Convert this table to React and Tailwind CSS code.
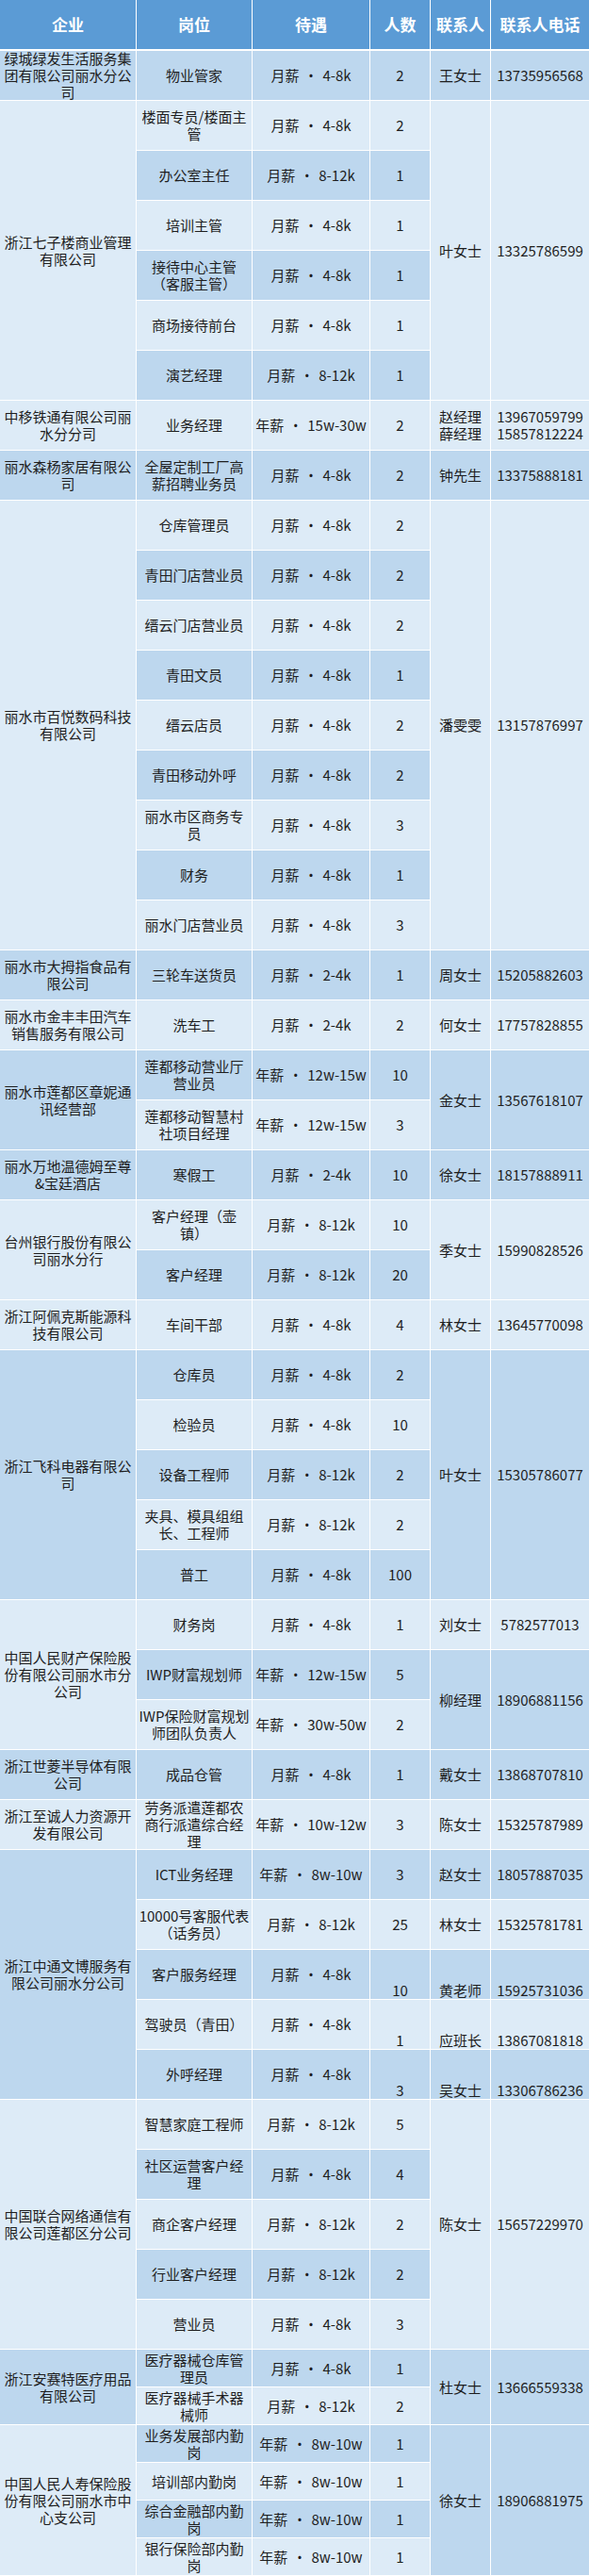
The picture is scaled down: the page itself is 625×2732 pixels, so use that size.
import React from "react";

const DARK = "bg-[#bdd7ee]";
const LIGHT = "bg-[#ddebf7]";

const groups = [
  {
    company: ["绿城绿发生活服务集", "团有限公司丽水分公", "司"],
    jobs: [{ pos: ["物业管家"], kind: "月薪", pay: "4-8k", num: "2" }],
    contacts: [{ name: ["王女士"], phone: ["13735956568"], span: 1 }],
  },
  {
    company: ["浙江七子楼商业管理", "有限公司"],
    jobs: [
      { pos: ["楼面专员/楼面主", "管"], kind: "月薪", pay: "4-8k", num: "2" },
      { pos: ["办公室主任"], kind: "月薪", pay: "8-12k", num: "1" },
      { pos: ["培训主管"], kind: "月薪", pay: "4-8k", num: "1" },
      { pos: ["接待中心主管", "（客服主管）"], kind: "月薪", pay: "4-8k", num: "1" },
      { pos: ["商场接待前台"], kind: "月薪", pay: "4-8k", num: "1" },
      { pos: ["演艺经理"], kind: "月薪", pay: "8-12k", num: "1" },
    ],
    contacts: [{ name: ["叶女士"], phone: ["13325786599"], span: 6 }],
  },
  {
    company: ["中移铁通有限公司丽", "水分分司"],
    jobs: [{ pos: ["业务经理"], kind: "年薪", pay: "15w-30w", num: "2" }],
    contacts: [{ name: ["赵经理", "薛经理"], phone: ["13967059799", "15857812224"], span: 1 }],
  },
  {
    company: ["丽水森杨家居有限公", "司"],
    jobs: [{ pos: ["全屋定制工厂高", "薪招聘业务员"], kind: "月薪", pay: "4-8k", num: "2" }],
    contacts: [{ name: ["钟先生"], phone: ["13375888181"], span: 1 }],
  },
  {
    company: ["丽水市百悦数码科技", "有限公司"],
    jobs: [
      { pos: ["仓库管理员"], kind: "月薪", pay: "4-8k", num: "2" },
      { pos: ["青田门店营业员"], kind: "月薪", pay: "4-8k", num: "2" },
      { pos: ["缙云门店营业员"], kind: "月薪", pay: "4-8k", num: "2" },
      { pos: ["青田文员"], kind: "月薪", pay: "4-8k", num: "1" },
      { pos: ["缙云店员"], kind: "月薪", pay: "4-8k", num: "2" },
      { pos: ["青田移动外呼"], kind: "月薪", pay: "4-8k", num: "2" },
      { pos: ["丽水市区商务专", "员"], kind: "月薪", pay: "4-8k", num: "3" },
      { pos: ["财务"], kind: "月薪", pay: "4-8k", num: "1" },
      { pos: ["丽水门店营业员"], kind: "月薪", pay: "4-8k", num: "3" },
    ],
    contacts: [{ name: ["潘雯雯"], phone: ["13157876997"], span: 9 }],
  },
  {
    company: ["丽水市大拇指食品有", "限公司"],
    jobs: [{ pos: ["三轮车送货员"], kind: "月薪", pay: "2-4k", num: "1" }],
    contacts: [{ name: ["周女士"], phone: ["15205882603"], span: 1 }],
  },
  {
    company: ["丽水市金丰丰田汽车", "销售服务有限公司"],
    jobs: [{ pos: ["洗车工"], kind: "月薪", pay: "2-4k", num: "2" }],
    contacts: [{ name: ["何女士"], phone: ["17757828855"], span: 1 }],
  },
  {
    company: ["丽水市莲都区章妮通", "讯经营部"],
    jobs: [
      { pos: ["莲都移动营业厅", "营业员"], kind: "年薪", pay: "12w-15w", num: "10" },
      { pos: ["莲都移动智慧村", "社项目经理"], kind: "年薪", pay: "12w-15w", num: "3" },
    ],
    contacts: [{ name: ["金女士"], phone: ["13567618107"], span: 2 }],
  },
  {
    company: ["丽水万地温德姆至尊", "&宝廷酒店"],
    jobs: [{ pos: ["寒假工"], kind: "月薪", pay: "2-4k", num: "10" }],
    contacts: [{ name: ["徐女士"], phone: ["18157888911"], span: 1 }],
  },
  {
    company: ["台州银行股份有限公", "司丽水分行"],
    jobs: [
      { pos: ["客户经理（壶", "镇）"], kind: "月薪", pay: "8-12k", num: "10" },
      { pos: ["客户经理"], kind: "月薪", pay: "8-12k", num: "20" },
    ],
    contacts: [{ name: ["季女士"], phone: ["15990828526"], span: 2 }],
  },
  {
    company: ["浙江阿佩克斯能源科", "技有限公司"],
    jobs: [{ pos: ["车间干部"], kind: "月薪", pay: "4-8k", num: "4" }],
    contacts: [{ name: ["林女士"], phone: ["13645770098"], span: 1 }],
  },
  {
    company: ["浙江飞科电器有限公", "司"],
    jobs: [
      { pos: ["仓库员"], kind: "月薪", pay: "4-8k", num: "2" },
      { pos: ["检验员"], kind: "月薪", pay: "4-8k", num: "10" },
      { pos: ["设备工程师"], kind: "月薪", pay: "8-12k", num: "2" },
      { pos: ["夹具、模具组组", "长、工程师"], kind: "月薪", pay: "8-12k", num: "2" },
      { pos: ["普工"], kind: "月薪", pay: "4-8k", num: "100" },
    ],
    contacts: [{ name: ["叶女士"], phone: ["15305786077"], span: 5 }],
  },
  {
    company: ["中国人民财产保险股", "份有限公司丽水市分", "公司"],
    jobs: [
      { pos: ["财务岗"], kind: "月薪", pay: "4-8k", num: "1" },
      { pos: ["IWP财富规划师"], kind: "年薪", pay: "12w-15w", num: "5" },
      { pos: ["IWP保险财富规划", "师团队负责人"], kind: "年薪", pay: "30w-50w", num: "2" },
    ],
    contacts: [
      { name: ["刘女士"], phone: ["5782577013"], span: 1 },
      { name: ["柳经理"], phone: ["18906881156"], span: 2 },
    ],
  },
  {
    company: ["浙江世菱半导体有限", "公司"],
    jobs: [{ pos: ["成品仓管"], kind: "月薪", pay: "4-8k", num: "1" }],
    contacts: [{ name: ["戴女士"], phone: ["13868707810"], span: 1 }],
  },
  {
    company: ["浙江至诚人力资源开", "发有限公司"],
    jobs: [{ pos: ["劳务派遣莲都农", "商行派遣综合经", "理"], kind: "年薪", pay: "10w-12w", num: "3" }],
    contacts: [{ name: ["陈女士"], phone: ["15325787989"], span: 1 }],
  },
  {
    company: ["浙江中通文博服务有", "限公司丽水分公司"],
    jobs: [
      { pos: ["ICT业务经理"], kind: "年薪", pay: "8w-10w", num: "3" },
      { pos: ["10000号客服代表", "（话务员）"], kind: "月薪", pay: "8-12k", num: "25" },
      { pos: ["客户服务经理"], kind: "月薪", pay: "4-8k", num: "10", bottom: true },
      { pos: ["驾驶员（青田）"], kind: "月薪", pay: "4-8k", num: "1", bottom: true },
      { pos: ["外呼经理"], kind: "月薪", pay: "4-8k", num: "3", bottom: true },
    ],
    contacts: [
      { name: ["赵女士"], phone: ["18057887035"], span: 1 },
      { name: ["林女士"], phone: ["15325781781"], span: 1 },
      { name: ["黄老师"], phone: ["15925731036"], span: 1, bottom: true },
      { name: ["应班长"], phone: ["13867081818"], span: 1, bottom: true },
      { name: ["吴女士"], phone: ["13306786236"], span: 1, bottom: true },
    ],
  },
  {
    company: ["中国联合网络通信有", "限公司莲都区分公司"],
    jobs: [
      { pos: ["智慧家庭工程师"], kind: "月薪", pay: "8-12k", num: "5" },
      { pos: ["社区运营客户经", "理"], kind: "月薪", pay: "4-8k", num: "4" },
      { pos: ["商企客户经理"], kind: "月薪", pay: "8-12k", num: "2" },
      { pos: ["行业客户经理"], kind: "月薪", pay: "8-12k", num: "2" },
      { pos: ["营业员"], kind: "月薪", pay: "4-8k", num: "3" },
    ],
    contacts: [{ name: ["陈女士"], phone: ["15657229970"], span: 5 }],
  },
  {
    company: ["浙江安赛特医疗用品", "有限公司"],
    short: true,
    jobs: [
      { pos: ["医疗器械仓库管", "理员"], kind: "月薪", pay: "4-8k", num: "1" },
      { pos: ["医疗器械手术器", "械师"], kind: "月薪", pay: "8-12k", num: "2" },
    ],
    contacts: [{ name: ["杜女士"], phone: ["13666559338"], span: 2 }],
  },
  {
    company: ["中国人民人寿保险股", "份有限公司丽水市中", "心支公司"],
    companyBg: LIGHT,
    short: true,
    jobs: [
      { pos: ["业务发展部内勤", "岗"], kind: "年薪", pay: "8w-10w", num: "1" },
      { pos: ["培训部内勤岗"], kind: "年薪", pay: "8w-10w", num: "1" },
      { pos: ["综合金融部内勤", "岗"], kind: "年薪", pay: "8w-10w", num: "1" },
      { pos: ["银行保险部内勤", "岗"], kind: "年薪", pay: "8w-10w", num: "1" },
    ],
    contacts: [{ name: ["徐女士"], phone: ["18906881975"], span: 4 }],
  },
];

const Lines = ({ lines }) =>
  lines.map((l, i) => (
    <React.Fragment key={i}>
      {i > 0 && <br />}
      {l}
    </React.Fragment>
  ));

const Cell = ({ span = 1, short, bg, last, bottom, children }) => {
  const h = short ? "h-[39px]" : "h-[52px]";
  return (
    <td
      rowSpan={span}
      className={`${bg} border-b border-white p-0 text-center align-middle ${last ? "" : "border-r"}`}
    >
      {span === 1 ? (
        <div className={`flex ${h} justify-center px-1 ${bottom ? "items-end" : "items-center"}`}>
          <div className="whitespace-nowrap">{children}</div>
        </div>
      ) : (
        <div className="whitespace-nowrap px-1">{children}</div>
      )}
    </td>
  );
};

const heads = ["企业", "岗位", "待遇", "人数", "联系人", "联系人电话"];

export default function App() {
  let idx = 0;
  const rows = [];

  groups.forEach((g, gi) => {
    const contactAt = {};
    let at = 0;
    g.contacts.forEach((c) => {
      contactAt[at] = c;
      at += c.span;
    });

    g.jobs.forEach((j, ji) => {
      idx += 1;
      const bg = idx % 2 ? DARK : LIGHT;
      const c = contactAt[ji];
      rows.push(
        <tr key={idx} className={g.short ? "h-[40px]" : "h-[53px]"}>
          {ji === 0 && (
            <Cell span={g.jobs.length} short={g.short} bg={g.companyBg || bg}>
              <Lines lines={g.company} />
            </Cell>
          )}
          <Cell short={g.short} bg={bg}>
            <Lines lines={j.pos} />
          </Cell>
          <Cell short={g.short} bg={bg}>
            {j.kind}
            <span className="mx-[5px]">·</span>
            {j.pay}
          </Cell>
          <Cell short={g.short} bg={bg} bottom={j.bottom}>
            {j.num}
          </Cell>
          {c && (
            <Cell span={c.span} short={g.short} bg={bg} bottom={c.bottom}>
              <Lines lines={c.name} />
            </Cell>
          )}
          {c && (
            <Cell span={c.span} short={g.short} bg={bg} bottom={c.bottom} last>
              <Lines lines={c.phone} />
            </Cell>
          )}
        </tr>
      );
    });
  });

  return (
    <div className="w-[625px] bg-white font-['Noto_Sans_CJK_SC',sans-serif] text-[15px] leading-[18px] text-[#1e1e1e]">
      <table className="w-[625px] table-fixed border-separate border-spacing-0">
        <colgroup>
          <col className="w-[145px]" />
          <col className="w-[123px]" />
          <col className="w-[125px]" />
          <col className="w-[64px]" />
          <col className="w-[64px]" />
          <col className="w-[104px]" />
        </colgroup>
        <thead>
          <tr className="h-[54px]">
            {heads.map((h, i) => (
              <th
                key={h}
                className={`bg-[#5b9bd5] p-0 text-center align-middle text-[17px] font-bold text-white border-b-2 border-white ${i < 5 ? "border-r" : ""}`}
              >
                {h}
              </th>
            ))}
          </tr>
        </thead>
        <tbody>{rows}</tbody>
      </table>
    </div>
  );
}
